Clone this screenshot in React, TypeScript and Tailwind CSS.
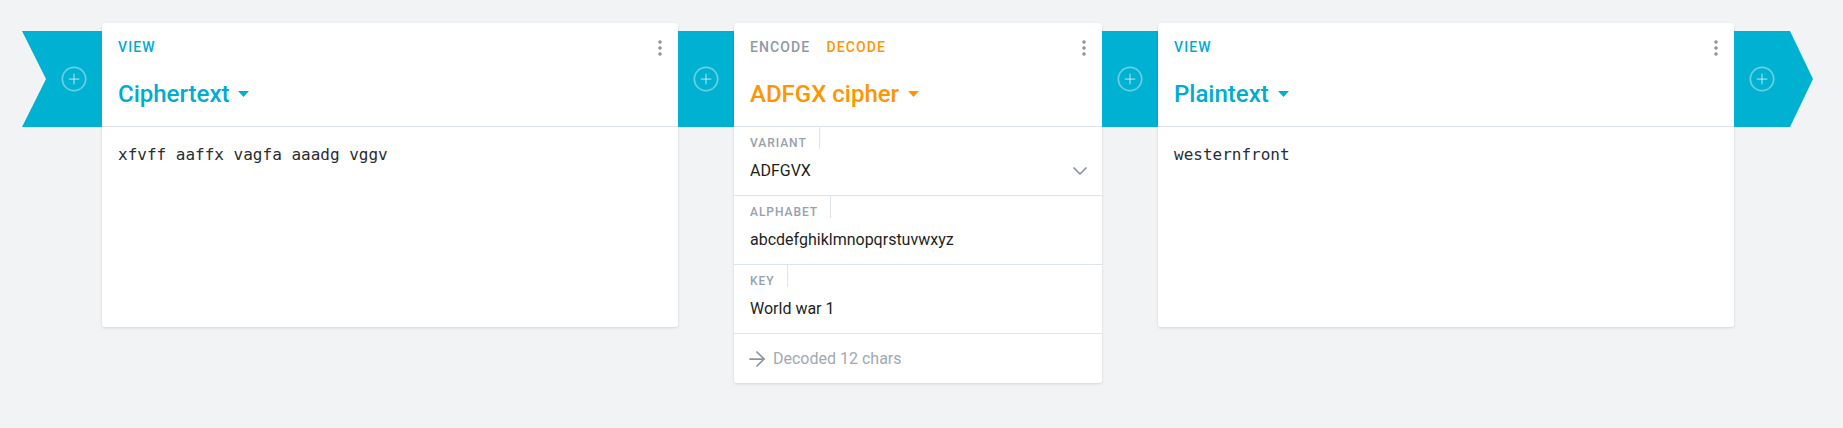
import { ArrowRight, ChevronDown, CirclePlus } from "lucide-react";

const sans = { fontFamily: "Roboto, 'Noto Sans', sans-serif" };

function Kebab() {
  return (
    <svg width="6" height="16" viewBox="0 0 6 16" className="text-[#8b949d]">
      <circle cx="3" cy="2" r="1.8" fill="currentColor" />
      <circle cx="3" cy="8" r="1.8" fill="currentColor" />
      <circle cx="3" cy="14" r="1.8" fill="currentColor" />
    </svg>
  );
}

function Caret({ color }: { color: string }) {
  return (
    <svg width="11" height="6" viewBox="0 0 11 6" className={color}>
      <path d="M0 0h11L5.5 6z" fill="currentColor" />
    </svg>
  );
}

function Plus() {
  return <CirclePlus size={28} strokeWidth={1.5} className="text-white/40" />;
}

function Ribbon({ kind }: { kind: "start" | "mid" | "end" }) {
  if (kind === "start") {
    return (
      <div className="mt-2 h-24 w-20 shrink-0 bg-[#00b1d2] [clip-path:polygon(0_0,100%_0,100%_100%,0_100%,30%_50%)] flex items-center justify-end pr-[14px]">
        <Plus />
      </div>
    );
  }
  if (kind === "end") {
    return (
      <div className="mt-2 h-24 w-[79px] shrink-0 bg-[#00b1d2] [clip-path:polygon(0_0,56px_0,100%_50%,56px_100%,0_100%)] flex items-center pl-[14px]">
        <Plus />
      </div>
    );
  }
  return (
    <div className="mt-2 h-24 w-14 shrink-0 bg-[#00b1d2] flex items-center justify-center">
      <Plus />
    </div>
  );
}

function CardHeader({ children, title, titleColor, caretColor }: { children: React.ReactNode; title: string; titleColor: string; caretColor: string }) {
  return (
    <div className="border-b border-[#dde4ea] px-4 pt-4 pb-4 relative">
      <div className="flex gap-4 text-sm leading-4 font-medium tracking-[0.08em] uppercase">{children}</div>
      <div className="absolute right-[15px] top-[17px]">
        <Kebab />
      </div>
      <div className={`mt-[23px] flex items-center gap-[9px] text-2xl leading-8 font-medium ${titleColor}`}>
        <span>{title}</span>
        <Caret color={caretColor} />
      </div>
    </div>
  );
}

function ViewCard({ title, text }: { title: string; text: string }) {
  return (
    <div className="w-[576px] h-[304px] shrink-0 bg-white rounded-[3px] shadow-[0_1px_3px_rgba(0,0,0,0.12)]">
      <CardHeader title={title} titleColor="text-[#00acd0]" caretColor="text-[#00acd0]">
        <span className="text-[#00acd0]">View</span>
      </CardHeader>
      <div className="px-4 pt-4 text-base leading-6 text-[#2a2d31] whitespace-pre" style={{ fontFamily: "'DejaVu Sans Mono', monospace" }}>
        {text}
      </div>
    </div>
  );
}

function Field({ label, value, select }: { label: string; value: string; select?: boolean }) {
  return (
    <div className="border-b border-[#dde4ea] pl-4 pb-3">
      <div className="flex">
        <div className="pt-[10px] pr-3 border-r border-[#dde4ea] text-xs leading-3 font-medium tracking-[0.08em] uppercase text-[#97a1ab]">
          {label}
        </div>
      </div>
      <div className="mt-[10px] flex items-center justify-between pr-[10px] text-base leading-6 text-[#1d1f22]">
        <span>{value}</span>
        {select && <ChevronDown size={24} strokeWidth={1.75} className="text-[#8b949d]" />}
      </div>
    </div>
  );
}

function CipherCard() {
  return (
    <div className="w-[368px] h-[360px] shrink-0 bg-white rounded-[3px] shadow-[0_1px_3px_rgba(0,0,0,0.12)]">
      <CardHeader title="ADFGX cipher" titleColor="text-[#ff9500]" caretColor="text-[#ff9500]">
        <span className="text-[#8f99a3]">Encode</span>
        <span className="text-[#ff9500]">Decode</span>
      </CardHeader>
      <Field label="Variant" value="ADFGVX" select />
      <Field label="Alphabet" value="abcdefghiklmnopqrstuvwxyz" />
      <Field label="Key" value="World war 1" />
      <div className="flex items-center gap-1 pl-[11px] py-[13px] text-base leading-6 text-[#a0a9b2]">
        <ArrowRight size={24} strokeWidth={1.75} className="text-[#8b949d]" />
        <span>Decoded 12 chars</span>
      </div>
    </div>
  );
}

export default function App() {
  return (
    <div className="w-[1843px] h-[428px] bg-[#f2f3f5] pt-[23px] pl-[22px]" style={sans}>
      <div className="flex items-start">
        <Ribbon kind="start" />
        <ViewCard title="Ciphertext" text="xfvff aaffx vagfa aaadg vggv" />
        <Ribbon kind="mid" />
        <CipherCard />
        <Ribbon kind="mid" />
        <ViewCard title="Plaintext" text="westernfront" />
        <Ribbon kind="end" />
      </div>
    </div>
  );
}
